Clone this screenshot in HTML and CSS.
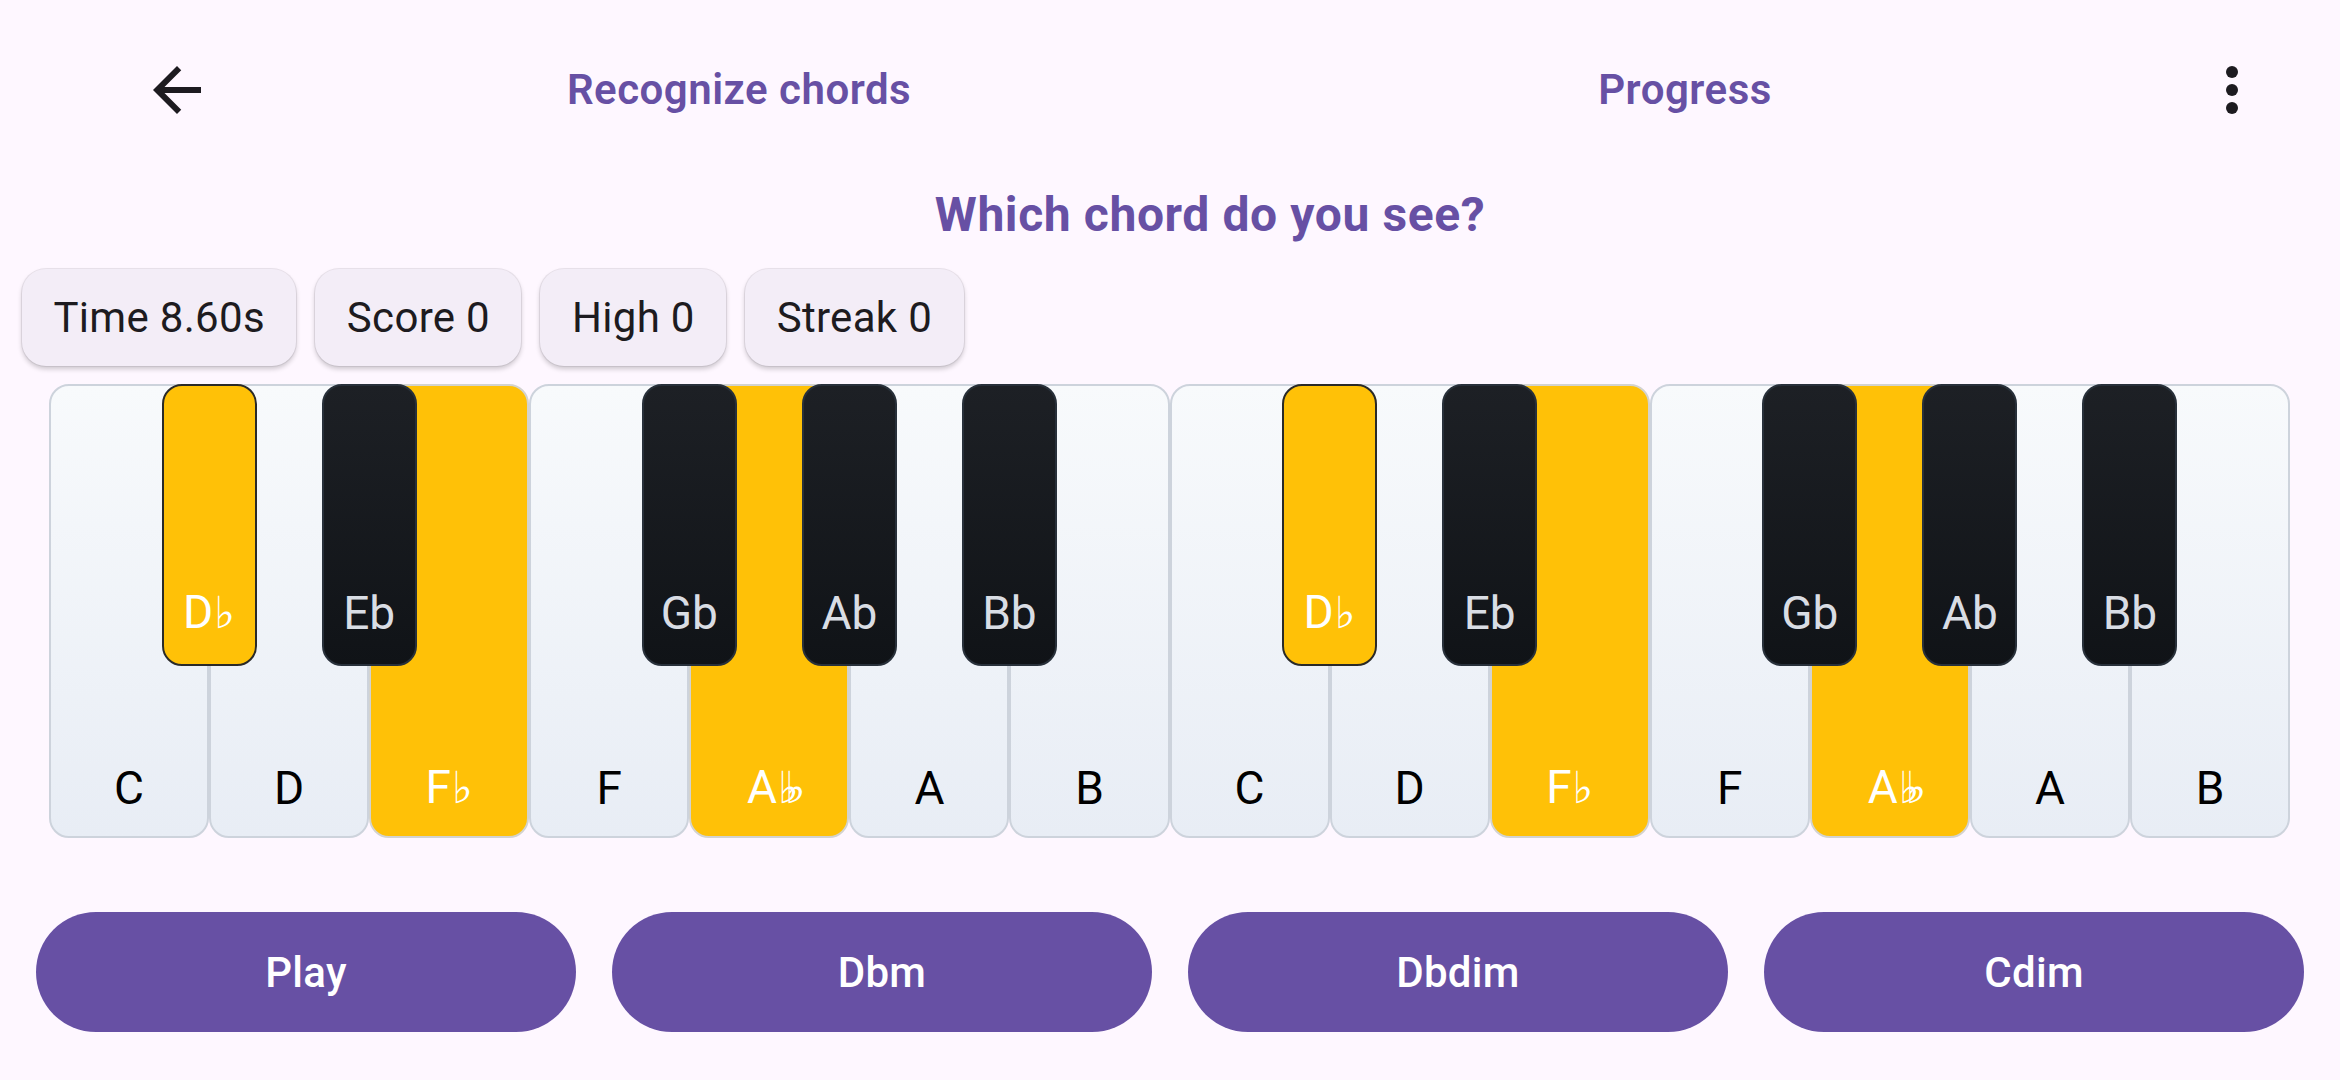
FILE: index.html
```html
<!DOCTYPE html>
<html lang="en">
<head>
<meta charset="utf-8">
<title>Recognize chords</title>
<link rel="stylesheet" href="styles.css">
</head>
<body>
<div class="screen">
  <header class="topbar">
    <div class="icon-btn back">
      <svg viewBox="0 0 24 24" width="72" height="72"><path d="M20 11H7.83l5.59-5.59L12 4l-8 8 8 8 1.41-1.41L7.83 13H20v-2z" fill="#1d1b20"/></svg>
    </div>
    <nav class="tabs">
      <div class="tab">Recognize chords</div>
      <div class="tab">Progress</div>
    </nav>
    <div class="icon-btn menu">
      <svg viewBox="0 0 24 24" width="72" height="72"><circle cx="12" cy="6" r="2" fill="#1d1b20"/><circle cx="12" cy="12" r="2" fill="#1d1b20"/><circle cx="12" cy="18" r="2" fill="#1d1b20"/></svg>
    </div>
  </header>

  <h1 class="question">Which chord do you see?</h1>

  <div class="chips">
    <div class="chip">Time 8.60s</div>
    <div class="chip">Score 0</div>
    <div class="chip">High 0</div>
    <div class="chip">Streak 0</div>
  </div>

  <div class="keyboard">
    <div class="whites">
      <div class="wkey"><span>C</span></div>
      <div class="wkey"><span>D</span></div>
      <div class="wkey hl"><span>F<span class="flat">♭</span></span></div>
      <div class="wkey"><span>F</span></div>
      <div class="wkey hl"><span>A<span class="flat dbl">♭♭</span></span></div>
      <div class="wkey"><span>A</span></div>
      <div class="wkey"><span>B</span></div>
      <div class="wkey"><span>C</span></div>
      <div class="wkey"><span>D</span></div>
      <div class="wkey hl"><span>F<span class="flat">♭</span></span></div>
      <div class="wkey"><span>F</span></div>
      <div class="wkey hl"><span>A<span class="flat dbl">♭♭</span></span></div>
      <div class="wkey"><span>A</span></div>
      <div class="wkey"><span>B</span></div>
    </div>
    <div class="bkey hl" style="--k:1"><span>D<span class="flat">♭</span></span></div>
    <div class="bkey" style="--k:2"><span>Eb</span></div>
    <div class="bkey" style="--k:4"><span>Gb</span></div>
    <div class="bkey" style="--k:5"><span>Ab</span></div>
    <div class="bkey" style="--k:6"><span>Bb</span></div>
    <div class="bkey hl" style="--k:8"><span>D<span class="flat">♭</span></span></div>
    <div class="bkey" style="--k:9"><span>Eb</span></div>
    <div class="bkey" style="--k:11"><span>Gb</span></div>
    <div class="bkey" style="--k:12"><span>Ab</span></div>
    <div class="bkey" style="--k:13"><span>Bb</span></div>
  </div>

  <div class="answers">
    <button class="answer">Play</button>
    <button class="answer">Dbm</button>
    <button class="answer">Dbdim</button>
    <button class="answer">Cdim</button>
  </div>
</div>
</body>
</html>
```

FILE: styles.css
```css
* { box-sizing: border-box; }
html, body {
  margin: 0;
  padding: 0;
  background: #FEF7FF;
}
body {
  font-family: Roboto, "DejaVu Sans", sans-serif;
  color: #1d1b20;
  width: 2340px;
  height: 1080px;
  overflow: hidden;
}
.screen {
  display: flex;
  flex-direction: column;
  width: 2340px;
  height: 1080px;
}

/* top bar */
.topbar {
  display: flex;
  align-items: center;
  height: 180px;
  padding: 0 72px 0 141px;
}
.icon-btn {
  width: 72px;
  height: 72px;
  display: flex;
  align-items: center;
  justify-content: center;
}
.icon-btn svg { display: block; }
.back { margin-right: 53px; }
.menu { margin-left: 38px; }
.tabs {
  flex: 1;
  display: flex;
}
.tab {
  flex: 1;
  text-align: center;
  font-size: 42px;
  font-weight: 600;
  letter-spacing: 0.5px;
  color: #6750A4;
  line-height: 56px;
}

/* question */
.question {
  margin: 7px 0 0 0;
  padding-left: 80px;
  text-align: center;
  font-size: 48px;
  line-height: 56px;
  font-weight: 700;
  letter-spacing: 0.6px;
  color: #6750A4;
}

/* chips */
.chips {
  display: flex;
  gap: 19px;
  margin-top: 26px;
  padding-left: 22px;
}
.chip {
  height: 97px;
  padding: 0 31.5px;
  display: flex;
  align-items: center;
  background: #F3EDF7;
  border-radius: 24px;
  font-size: 42px;
  letter-spacing: 0.3px;
  color: #1d1b20;
  box-shadow: 0 0 0 1px rgba(120, 110, 130, 0.14), 0 3px 5px rgba(0, 0, 0, 0.2);
}

/* keyboard */
.keyboard {
  position: relative;
  margin: 18px 50px 0 49px;
  height: 454px;
}
.whites {
  display: flex;
  height: 100%;
}
.wkey {
  flex: 1;
  display: flex;
  align-items: flex-end;
  justify-content: center;
  padding-bottom: 25px;
  border: 2.5px solid #cdd3dc;
  border-radius: 20px;
  background: linear-gradient(180deg, #f8fafc 0%, #e8edf5 100%);
  font-size: 46px;
  line-height: 46px;
  color: #000;
}
.wkey.hl {
  background: #FFC107;
  border-color: #d3d3cf;
  color: #fff;
}
.bkey {
  position: absolute;
  top: 0;
  left: calc(var(--k) * 100% / 14 - 47.5px);
  width: 95px;
  height: 282px;
  display: flex;
  align-items: flex-end;
  justify-content: center;
  padding-bottom: 28px;
  border: 2.5px solid #28303a;
  border-radius: 20px;
  background: linear-gradient(180deg, #1d2025 0%, #101317 100%);
  font-size: 46px;
  line-height: 46px;
  color: #d9dde4;
}
.bkey.hl {
  background: #FFC107;
  border-color: #2a2a28;
  color: #fff;
}
.flat {
  font-family: "DejaVu Sans", sans-serif;
  font-size: 44px;
  font-style: italic;
  margin-left: 1px;
}
.flat.dbl { letter-spacing: -14px; }

/* answers */
.answers {
  display: flex;
  gap: 36px;
  padding: 0 36px;
  margin-top: 74px;
}
.answer {
  flex: 1;
  height: 120px;
  border: none;
  border-radius: 60px;
  background: #6750A4;
  color: #fff;
  font-family: Roboto, sans-serif;
  font-size: 42px;
  font-weight: 500;
  letter-spacing: 0.3px;
}
```
